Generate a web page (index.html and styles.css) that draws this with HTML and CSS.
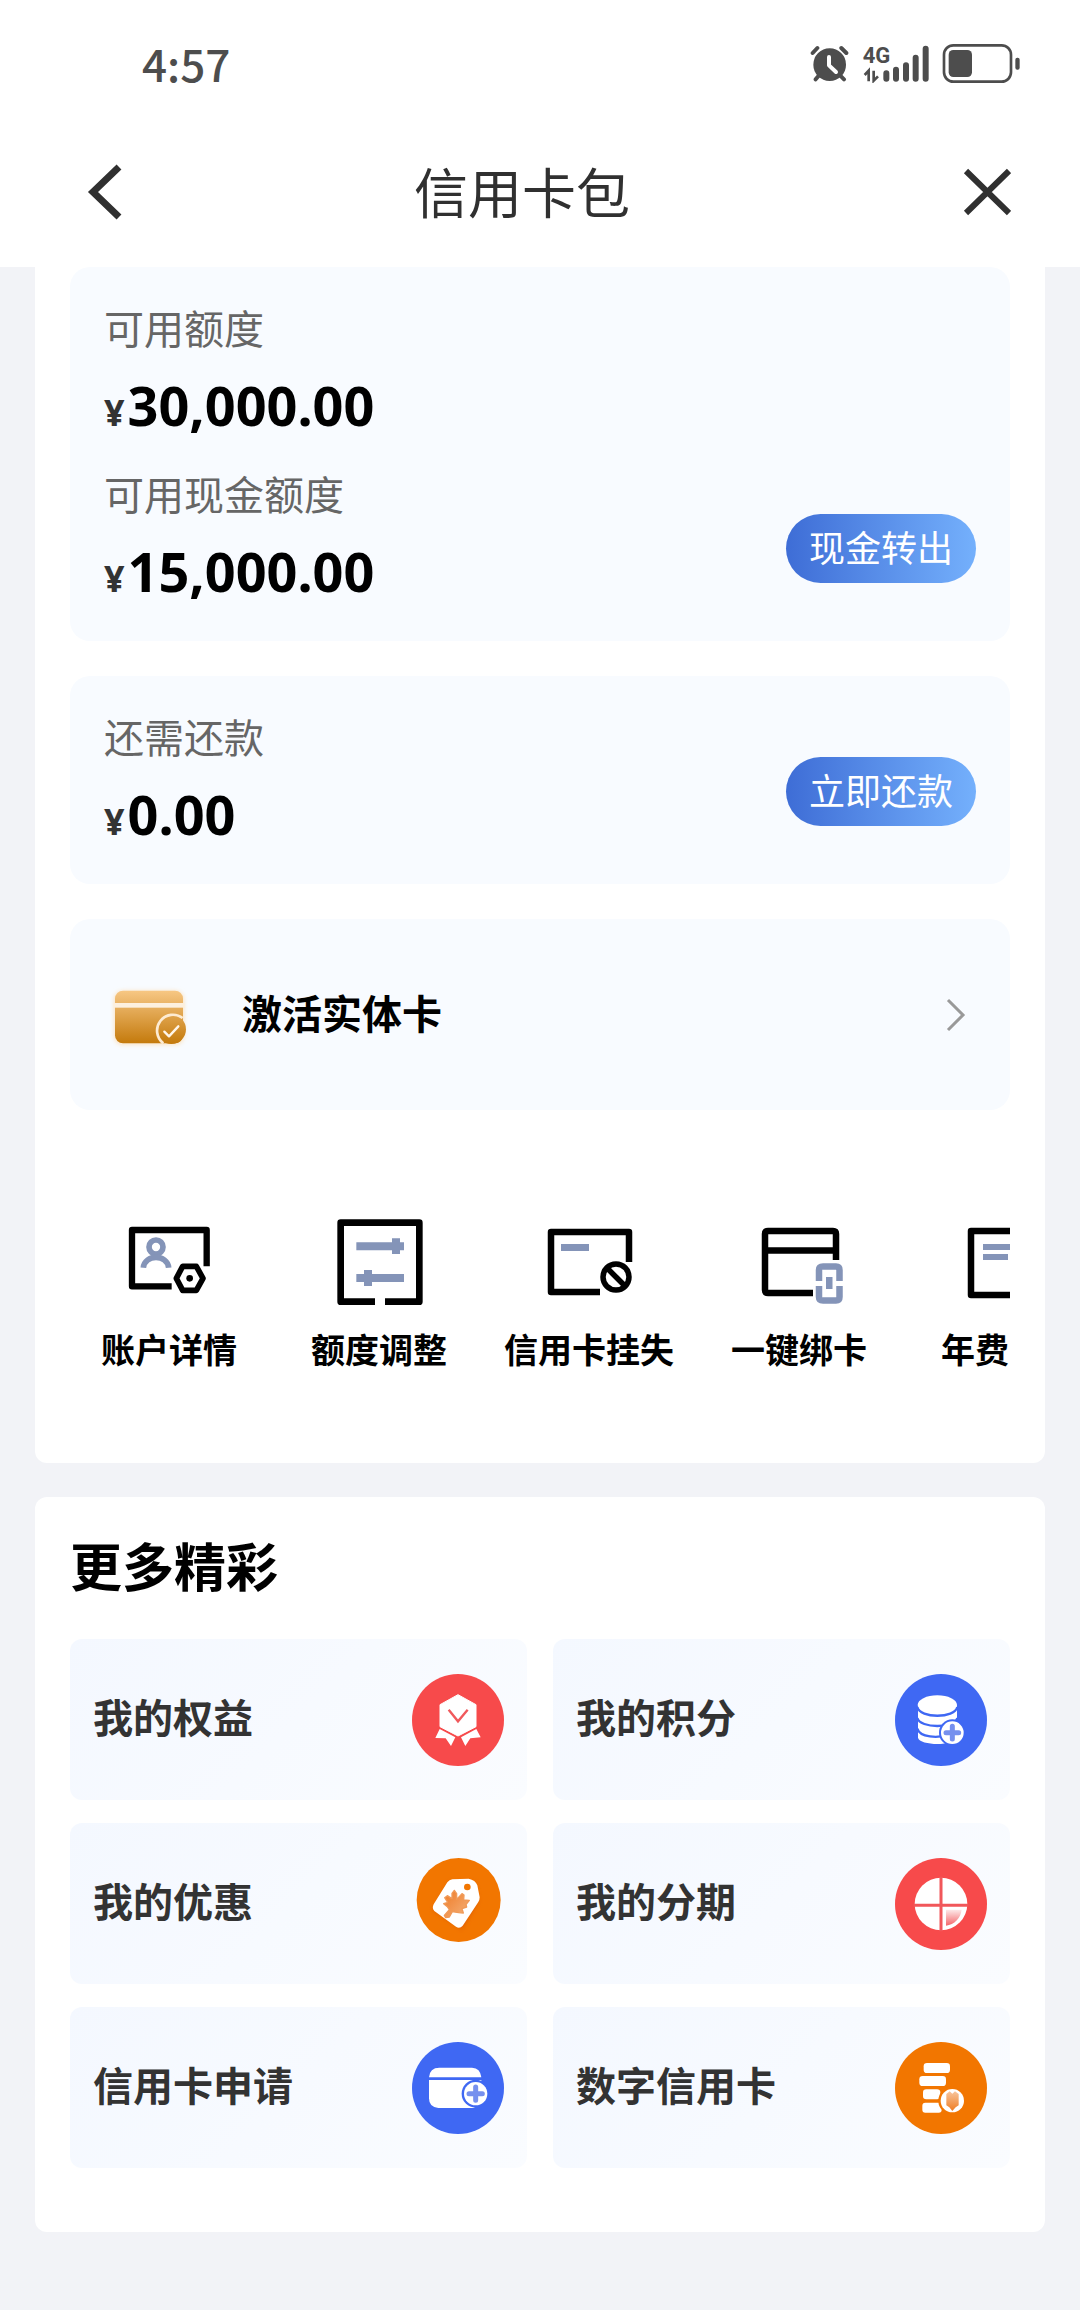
FILE: index.html
```html
<!DOCTYPE html>
<html lang="zh-CN">
<head>
<meta charset="utf-8">
<meta name="viewport" content="width=device-width, initial-scale=1">
<title>信用卡包</title>
<link rel="stylesheet" href="styles.css">
</head>
<body>
<div class="top">
  <div class="status">
    <span class="status-time">4:57</span>
    <div class="status-icons">
      <svg width="40" height="40" viewBox="90 40 120 120" aria-hidden="true">
        <g fill="none" stroke="#4d4d4d" stroke-width="12" stroke-linecap="round">
          <path d="M98 70 L112 55 M184 55 L199 70 M116 138 L107 149 M181 138 L192 149"/>
        </g>
        <circle cx="149" cy="105" r="49" fill="#4d4d4d"/>
        <path d="M147 82 V107 L168 127" fill="none" stroke="#fff" stroke-width="12" stroke-linecap="round" stroke-linejoin="round"/>
      </svg>
      <svg width="68" height="40" viewBox="246 40 204 120" aria-hidden="true">
        <text class="network" x="248" y="101">4G</text>
        <g stroke="#4d4d4d" stroke-width="18" stroke-linecap="round">
          <path d="M319 131 V147 M348 120 V147 M378 107 V147 M407 84 V147 M437 57 V147"/>
        </g>
        <path d="M254 136 L266 123 V155 M281 123 V153 L294 140" fill="none" stroke="#4d4d4d" stroke-width="8"/>
      </svg>
      <svg width="78" height="40" viewBox="488 40 234 120" aria-hidden="true">
        <rect x="494" y="47" width="201" height="109" rx="28" fill="none" stroke="#4d4d4d" stroke-width="8"/>
        <rect x="508" y="61" width="70" height="81" rx="14" fill="#4d4d4d"/>
        <rect x="708" y="84" width="13" height="36" rx="6" fill="#4d4d4d"/>
      </svg>
    </div>
  </div>
  <header class="navbar">
    <button class="nav-back" type="button" aria-label="返回">
      <svg width="48" height="56" viewBox="0 0 48 56"><path d="M39 3 L13 28 L39 53" fill="none" stroke="#303030" stroke-width="7"/></svg>
    </button>
    <h1 class="nav-title">信用卡包</h1>
    <button class="nav-close" type="button" aria-label="关闭">
      <svg width="48" height="48" viewBox="0 0 48 48"><path d="M3 3 L46 45 M46 3 L3 45" fill="none" stroke="#303030" stroke-width="6"/></svg>
    </button>
  </header>
</div>

<main class="content">
  <section class="panel panel-account">
    <div class="card">
      <div class="figures">
        <div>
          <p class="label">可用额度</p>
          <p class="amount"><span class="currency">¥</span>30,000.00</p>
        </div>
        <div>
          <p class="label">可用现金额度</p>
          <p class="amount"><span class="currency">¥</span>15,000.00</p>
        </div>
      </div>
      <button class="pill" type="button">现金转出</button>
    </div>

    <div class="card">
      <div class="figures">
        <div>
          <p class="label">还需还款</p>
          <p class="amount"><span class="currency">¥</span>0.00</p>
        </div>
      </div>
      <button class="pill" type="button">立即还款</button>
    </div>

    <a class="activate" href="#activate">
      <svg width="80" height="75" viewBox="150 231 240 225" aria-hidden="true">
        <defs>
          <linearGradient id="gold" x1="0" y1="272" x2="0" y2="430" gradientUnits="userSpaceOnUse">
            <stop offset="0" stop-color="#f7c784"/><stop offset="1" stop-color="#c47a0c"/>
          </linearGradient>
          <filter id="glow" x="-20%" y="-20%" width="140%" height="140%"><feGaussianBlur stdDeviation="7"/></filter>
        </defs>
        <rect x="162" y="272" width="210" height="162" rx="26" fill="#fbe3c2" filter="url(#glow)"/>
        <rect x="165" y="272" width="204" height="158" rx="24" fill="url(#gold)"/>
        <rect x="160" y="309" width="214" height="14" fill="#fdf0de"/>
        <circle cx="334" cy="388" r="44" fill="url(#gold)"/>
        <path d="M310 430 A46 46 0 1 1 368 354" fill="none" stroke="#fdebd2" stroke-width="8"/>
        <path d="M313 395 L327 409 L355 379" fill="none" stroke="#fff6ea" stroke-width="7" stroke-linecap="round" stroke-linejoin="round"/>
      </svg>
      <span class="activate-text">激活实体卡</span>
      <svg width="20" height="34" viewBox="0 0 20 34" aria-hidden="true"><path d="M2 2 L17 17 L2 32" fill="none" stroke="#999" stroke-width="3"/></svg>
    </a>

    <nav class="services">
      <a class="service" href="#account">
        <svg width="90" height="90" viewBox="102 51 270 270" aria-hidden="true">
          <path d="M245 259 H126 V90 H350 V199" fill="none" stroke="#000" stroke-width="19" stroke-linejoin="round"/>
          <circle cx="198" cy="141" r="21" fill="none" stroke="#8494b8" stroke-width="17"/>
          <path d="M160 203 C164 162 232 162 236 203" fill="none" stroke="#8494b8" stroke-width="17"/>
          <path d="M259 235 L278 199 H319 L339 235 L319 271 H278 Z" fill="none" stroke="#000" stroke-width="17" stroke-linejoin="round"/>
          <circle cx="299" cy="235" r="10"/>
        </svg>
        <span class="service-label">账户详情</span>
      </a>
      <a class="service" href="#limit">
        <svg width="90" height="90" viewBox="732 51 270 270" aria-hidden="true">
          <path d="M855 305 H752 V68 H988 V305 H885" fill="none" stroke="#000" stroke-width="20" stroke-linejoin="round"/>
          <path d="M799 127 H906 V115 H930 V127 H942 V151 H930 V162 H906 V151 H799 Z M799 222 H822 V210 H846 V222 H942 V246 H846 V258 H822 V246 H799 Z" fill="#8494b8"/>
        </svg>
        <span class="service-label">额度调整</span>
      </a>
      <a class="service" href="#loss">
        <svg width="90" height="90" viewBox="0 0 90 90" aria-hidden="true">
          <path d="M56 75 H7 V15 H85 V45" fill="none" stroke="#000" stroke-width="6.5" stroke-linejoin="round"/>
          <rect x="17" y="27" width="28" height="7" fill="#8494b8"/>
          <circle cx="72" cy="60" r="13" fill="none" stroke="#000" stroke-width="5.5"/>
          <path d="M63 51 L81 69" stroke="#000" stroke-width="5.5"/>
        </svg>
        <span class="service-label">信用卡挂失</span>
      </a>
      <a class="service" href="#bind">
        <svg width="90" height="90" viewBox="0 0 90 90" aria-hidden="true">
          <path d="M59 76 H14 Q11 76 11 73 V17 Q11 14 14 14 H79 Q82 14 82 17 V43 M11 33.500 H82" fill="none" stroke="#000" stroke-width="6.5"/>
          <path d="M65 64 V53 Q65 49.500 69 49.500 H82 Q85.500 49.500 85.500 53 V64 M65 69 V80 Q65 83.500 69 83.500 H82 Q85.500 83.500 85.500 80 V69" fill="none" stroke="#8494b8" stroke-width="6.5"/>
          <rect x="72" y="60" width="6.5" height="12" fill="#8494b8"/>
        </svg>
        <span class="service-label">一键绑卡</span>
      </a>
      <a class="service" href="#fee">
        <svg width="90" height="90" viewBox="0 0 90 90" aria-hidden="true">
          <rect x="7" y="14" width="76" height="64" fill="none" stroke="#000" stroke-width="6.5" stroke-linejoin="round"/>
          <path d="M19 30 H58 M19 40 H44" stroke="#8494b8" stroke-width="6"/>
        </svg>
        <span class="service-label service-label-start">年费</span>
      </a>
    </nav>
  </section>

  <section class="panel panel-more">
    <h2 class="more-title">更多精彩</h2>
    <div class="tiles">
      <a class="tile" href="#benefits">
        <span class="tile-text">我的权益</span>
        <svg width="92" height="92" viewBox="66 72 276 276" aria-hidden="true">
          <circle cx="204" cy="210" r="138" fill="#f74a4b"/>
          <path d="M204 134 L258 164 V230 L204 258 L150 230 V164 Z" fill="#fff" stroke="#fff" stroke-width="3" stroke-linejoin="round"/>
          <path d="M176 179 L204 214 L233 179" fill="none" stroke="#f0595c" stroke-width="7"/>
          <path d="M149 237 L196 262 L183 288 L167 265 L136 264 Z M259 237 L213 262 L226 288 L241 265 L272 262 Z" fill="#fff"/>
        </svg>
      </a>
      <a class="tile" href="#points">
        <span class="tile-text">我的积分</span>
        <svg width="92" height="92" viewBox="78 72 276 276" aria-hidden="true">
          <circle cx="216" cy="210" r="138" fill="#3f68f3"/>
          <path d="M147 166 V263 C152 288 258 288 264 263 V166 Z" fill="#fff"/>
          <ellipse cx="205" cy="165" rx="59" ry="29" fill="#fff"/>
          <path d="M145 171 C153 206 257 206 265 171 M145 204 C153 236 257 236 265 204 M145 236 C153 264 210 264 228 255" fill="none" stroke="#3f68f3" stroke-width="7"/>
          <circle cx="250" cy="248" r="40" fill="#3f68f3"/>
          <circle cx="250" cy="248" r="34" fill="#fff"/>
          <path d="M250 229 V267 M231 248 H269" stroke="#7690ee" stroke-width="15" stroke-linecap="round"/>
        </svg>
      </a>
      <a class="tile" href="#offers">
        <span class="tile-text">我的优惠</span>
        <svg width="92" height="92" viewBox="66 624 276 276" aria-hidden="true">
          <defs>
            <filter id="tagShade" x="-20%" y="-20%" width="140%" height="150%"><feGaussianBlur stdDeviation="7"/></filter>
            <linearGradient id="leaf" x1="0" y1="0" x2="1" y2="1"><stop offset="0" stop-color="#ef7b26"/><stop offset="1" stop-color="#f4b27c"/></linearGradient>
          </defs>
          <circle cx="206" cy="750" r="126" fill="#f27600"/>
          <path d="M180 695 L255 697 L265 755 L215 838 L128 780 Z" fill="#e05f0c" filter="url(#tagShade)"/>
          <path d="M187 688 L236 686 Q256 690 262 706 L269 742 Q269 750 265 756 L218 827 Q209 837 198 830 L133 783 Q125 775 131 763 L172 697 Q178 689 187 688 Z" fill="#fff"/>
          <circle cx="232" cy="711" r="10" fill="#f27600"/>
          <path d="M193 721 L200 731 V748 L216 731 L222 735 L221 750 L238 751 L228 764 L230 771 L216 776 L220 789 L206 788 L187 785 L178 801 L167 803 L163 796 L178 779 L172 770 L161 761 L173 757 L164 743 L172 737 L186 746 V730 Z" fill="url(#leaf)" stroke="#f09a58" stroke-width="4" stroke-linejoin="round"/>
        </svg>
      </a>
      <a class="tile" href="#installment">
        <span class="tile-text">我的分期</span>
        <svg width="92" height="92" viewBox="78 624 276 276" aria-hidden="true">
          <defs><linearGradient id="slice" x1="0" y1="0" x2="0" y2="1"><stop offset="0" stop-color="#fdeaea"/><stop offset="1" stop-color="#f4666a"/></linearGradient></defs>
          <circle cx="216" cy="762" r="138" fill="#f74a4b"/>
          <circle cx="216" cy="762" r="79" fill="#fff"/>
          <path d="M231 779 H278 C275 805 256 823 231 827 Z" fill="url(#slice)"/>
          <path d="M216 680 V844 M134 766 H298" stroke="#f1575a" stroke-width="9"/>
        </svg>
      </a>
      <a class="tile" href="#apply">
        <span class="tile-text">信用卡申请</span>
        <svg width="92" height="92" viewBox="66 1176 276 276" aria-hidden="true">
          <circle cx="204" cy="1314" r="138" fill="#3f68f3"/>
          <path d="M117 1282 Q119 1253 148 1253 H246 Q271 1254 274 1282 Z" fill="#fff"/>
          <path d="M117 1290 H274 V1374 H145 Q117 1372 117 1345 Z" fill="#fff"/>
          <path d="M247 1376 L276 1360 V1376 Z" fill="#3f68f3"/>
          <circle cx="257" cy="1331" r="42" fill="#3f68f3"/>
          <circle cx="257" cy="1331" r="35" fill="#fff"/>
          <path d="M257 1311 V1351 M237 1331 H277" stroke="#7690ee" stroke-width="15" stroke-linecap="round"/>
        </svg>
      </a>
      <a class="tile" href="#digital">
        <span class="tile-text">数字信用卡</span>
        <svg width="92" height="92" viewBox="78 1176 276 276" aria-hidden="true">
          <defs><linearGradient id="rocket" x1="0" y1="0" x2="0" y2="1"><stop offset="0" stop-color="#f8c59c"/><stop offset="1" stop-color="#ee7c22"/></linearGradient></defs>
          <circle cx="216" cy="1314" r="138" fill="#f27600"/>
          <g fill="#fff">
            <rect x="164" y="1239" width="79" height="30" rx="10"/>
            <rect x="151" y="1278" width="80" height="30" rx="10"/>
            <rect x="162" y="1318" width="52" height="30" rx="10"/>
            <rect x="160" y="1358" width="58" height="30" rx="9"/>
          </g>
          <circle cx="250" cy="1352" r="42" fill="#f27600"/>
          <circle cx="250" cy="1352" r="35" fill="#fff"/>
          <path d="M232 1332 L242 1324 L250 1331 L258 1324 L269 1332 V1366 L260 1372 L250 1383 L241 1372 L232 1366 Z" fill="url(#rocket)"/>
        </svg>
      </a>
    </div>
  </section>
</main>
</body>
</html>
```
FILE: styles.css
```css
* {
  box-sizing: border-box;
}

body {
  margin: 0;
  min-height: 100vh;
  background: #f2f3f7;
  color: #000;
  font-family: "Noto Sans CJK SC", sans-serif;
}

h1,
h2,
p {
  margin: 0;
}

a {
  color: inherit;
  text-decoration: none;
}

button {
  border: 0;
  padding: 0;
  background: none;
  font: inherit;
  cursor: pointer;
}

svg {
  display: block;
  flex: none;
}

/* Status bar and title bar */
.top {
  background: #fff;
}

.status {
  display: flex;
  align-items: center;
  justify-content: space-between;
  height: 126px;
  padding: 0 60px 0 142px;
}

.status-time {
  color: #4d4d4d;
  font-size: 44px;
  font-weight: 500;
  line-height: 64px;
}

.status-icons {
  display: flex;
  gap: 12px;
}

.network {
  fill: #4d4d4d;
  font-family: Roboto, sans-serif;
  font-size: 66px;
  font-weight: 700;
}

.navbar {
  display: flex;
  align-items: center;
  height: 141px;
  padding: 0 69px 9px 80px;
}

.nav-back {
  width: 48px;
}

.nav-title {
  flex: 1;
  padding-bottom: 2px;
  color: #303030;
  font-size: 54px;
  font-weight: 400;
  line-height: 80px;
  text-align: center;
}

.nav-close {
  display: flex;
  justify-content: flex-end;
  width: 95px;
}

/* Panels */
.content {
  display: flex;
  flex-direction: column;
  gap: 34px;
  padding: 0 35px 78px;
}

.panel {
  border-radius: 12px;
  background: #fff;
}

.panel-account {
  display: flex;
  flex-direction: column;
  gap: 35px;
  padding: 0 35px 90px;
  border-radius: 0 0 12px 12px;
}

.card {
  display: flex;
  align-items: flex-end;
  justify-content: space-between;
  padding: 32px 34px 23px;
  border-radius: 20px;
  background: #f8fbff;
}

.figures {
  display: flex;
  flex-direction: column;
  gap: 13px;
}

.label {
  margin-bottom: 3px;
  color: #666;
  font-size: 40px;
  line-height: 56px;
}

.amount {
  font-family: "Noto Sans", "Noto Sans CJK SC", sans-serif;
  font-size: 54px;
  font-weight: 700;
  line-height: 94px;
}

.currency {
  margin-right: 3px;
  color: #333;
  font-size: 36px;
  line-height: 40px;
}

.pill {
  width: 190px;
  height: 69px;
  margin-bottom: 35px;
  padding-bottom: 6px;
  border-radius: 35px;
  background: linear-gradient(90deg, #3e6dd6, #74b0fc);
  color: #fff;
  font-size: 36px;
  line-height: 56px;
}

.activate {
  display: flex;
  align-items: center;
  gap: 52px;
  height: 191px;
  padding: 0 44px 0 40px;
  border-radius: 20px;
  background: #f8fbff;
}

.activate-text {
  flex: 1;
  padding-bottom: 6px;
  font-size: 40px;
  font-weight: 700;
  line-height: 56px;
}

/* Horizontally scrolling shortcuts */
.services {
  display: flex;
  gap: 12px;
  margin-top: 72px;
  overflow-x: auto;
  scrollbar-width: none;
}

.service {
  display: flex;
  flex: none;
  flex-direction: column;
  align-items: center;
  gap: 18px;
  width: 198px;
}

.service-label {
  min-width: 136px;
  font-size: 34px;
  font-weight: 700;
  line-height: 48px;
  text-align: center;
}

.service-label-start {
  text-align: left;
}

/* More section */
.panel-more {
  padding: 32px 35px 64px;
}

.more-title {
  margin-bottom: 38px;
  font-size: 52px;
  font-weight: 700;
  line-height: 72px;
}

.tiles {
  display: grid;
  grid-template-columns: 1fr 1fr;
  gap: 23px 26px;
}

.tile {
  display: flex;
  align-items: center;
  justify-content: space-between;
  height: 161px;
  padding: 0 23px;
  border-radius: 12px;
  background: linear-gradient(135deg, #f4f8ff, #fafcff);
  color: #333;
}

.tile-text {
  padding-bottom: 8px;
  font-size: 40px;
  font-weight: 700;
  line-height: 56px;
}
```
